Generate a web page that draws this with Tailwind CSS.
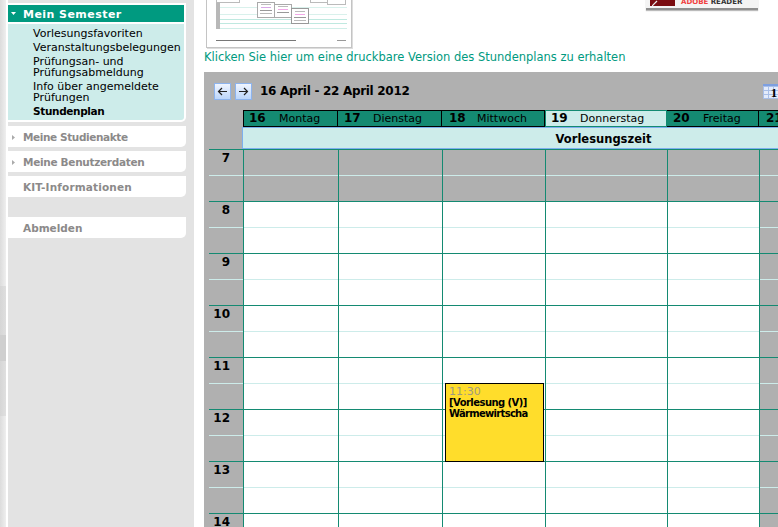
<!DOCTYPE html>
<html lang="de">
<head>
    <meta charset="UTF-8">
    <title>Stundenplan</title>
    <script src="https://cdn.jsdelivr.net/npm/@tailwindcss/browser@4"></script>
</head>
<body class="bg-white h-[527px] overflow-hidden font-['DejaVu_Sans',sans-serif] text-[11px] text-black">
<div class="flex h-[527px] overflow-hidden">
    <!-- linker Rand -->
    <div class="w-[6px] shrink-0 flex flex-col">
        <div class="h-[286px] bg-gradient-to-r from-[#dcdcdc] to-[#efefef]"></div>
        <div class="h-[49px] bg-gradient-to-r from-[#d6d6d6] to-[#dfdfdf]"></div>
        <div class="h-[26px] bg-[#cfcfcf]"></div>
        <div class="h-[55px] bg-gradient-to-r from-[#d6d6d6] to-[#e0e0e0]"></div>
        <div class="flex-1 bg-gradient-to-r from-[#dcdcdc] to-[#efefef]"></div>
    </div>

    <!-- Navigation -->
    <div class="ml-[2px] w-[186px] shrink-0 bg-[#e3e3e3] pr-[8px] pt-[3px]">
        <div class="bg-white pt-[2px] rounded-br-[5px] pr-[2px] pb-[2px]">
            <div class="h-[17px] bg-[#009a80] flex items-center text-white font-bold pl-[3px] pt-[4px] tracking-[0.45px]">
                <svg width="5" height="3" viewBox="0 0 5 3" class="mr-[7px] mb-[4px]"><path d="M0 0h5L2.500 3z" fill="#fff"/></svg>
                <span>Mein Semester</span>
            </div>
            <div class="mt-[2px] bg-[#cdecea] pl-[25px] pt-[4px] pb-[3px] leading-[11px] rounded-br-[3px]">
                <div class="mb-[3px]">Vorlesungsfavoriten</div>
                <div class="mb-[3px]">Veranstaltungsbelegungen</div>
                <div class="mb-[3px]">Prüfungsan- und<br>Prüfungsabmeldung</div>
                <div class="mb-[3px]">Info über angemeldete<br>Prüfungen</div>
                <div class="font-bold text-[10.500px] tracking-[-0.350px]">Stundenplan</div>
            </div>
        </div>
        <div class="mt-[4px] h-[21px] bg-white rounded-br-[5px] flex items-center pl-[4px] pt-[2px] font-bold text-[#8c8a8a] text-[10.500px] tracking-[-0.400px]">
            <svg width="3" height="5" viewBox="0 0 3 5" class="mr-[8px]"><path d="M0 0l3 2.500L0 5z" fill="#aaa"/></svg>Meine Studienakte
        </div>
        <div class="mt-[4px] h-[21px] bg-white rounded-br-[5px] flex items-center pl-[4px] pt-[2px] font-bold text-[#8c8a8a] text-[10.500px] tracking-[-0.300px]">
            <svg width="3" height="5" viewBox="0 0 3 5" class="mr-[8px]"><path d="M0 0l3 2.500L0 5z" fill="#aaa"/></svg>Meine Benutzerdaten
        </div>
        <div class="mt-[4px] h-[21px] bg-white rounded-br-[5px] flex items-center pl-[15px] pt-[2px] font-bold text-[#8c8a8a] text-[10.500px] tracking-[0.150px]">KIT-Informationen</div>
        <div class="mt-[20px] h-[21px] bg-white rounded-br-[5px] flex items-center pl-[15px] pt-[2px] font-bold text-[#8c8a8a] text-[10.500px]">Abmelden</div>
    </div>

    <!-- Inhalt -->
    <div class="ml-[10px] flex-1 min-w-0">
        <div class="h-[48px] relative">
            <!-- Vorschau druckbarer Stundenplan -->
            <div class="absolute left-[2px] top-[-10px] w-[146px] h-[58px] bg-white border border-[#c4c4c4] shadow-[1px_1px_0_#ddd]">
                <div class="absolute left-[10px] top-[16px] w-[130px] h-[8px] border-y border-[#d9f1ec]"></div>
                <div class="absolute left-[10px] top-[28px] w-[130px] h-[5px] border-y border-[#bfe9e0]"></div>
                <div class="absolute left-[10px] top-[35px] w-[130px] h-[3px] border-b border-[#cfeee8]"></div>
                <div class="absolute left-[9px] top-[0px] w-[4px] h-[38px] bg-[#b8b8b8]"></div>
                <div class="absolute left-[9px] top-[0px] w-[24px] h-[12px] border border-[#bbb] bg-white"></div>
                <div class="absolute left-[103px] top-[0px] w-[36px] h-[12px] border border-[#bbb] bg-white"></div>
                <div class="absolute left-[120px] top-[0px] w-[19px] h-[14px] border border-[#bbb] bg-white"></div>
                <div class="absolute left-[50px] top-[11px] w-[18px] h-[16px] border border-[#aaa] bg-white"></div>
                <div class="absolute left-[67px] top-[13px] w-[18px] h-[14px] border border-[#aaa] bg-white"></div>
                <div class="absolute left-[84px] top-[17px] w-[18px] h-[16px] border border-[#999] bg-white"></div>
                <div class="absolute left-[54px] top-[13px] w-[10px] h-[1px] bg-[#bbb]"></div>
                <div class="absolute left-[54px] top-[16px] w-[10px] h-[1px] bg-[#d9a8e8]"></div>
                <div class="absolute left-[53px] top-[19px] w-[12px] h-[1px] bg-[#999]"></div>
                <div class="absolute left-[53px] top-[22px] w-[12px] h-[1px] bg-[#bbb]"></div>
                <div class="absolute left-[71px] top-[15px] w-[10px] h-[1px] bg-[#bbb]"></div>
                <div class="absolute left-[71px] top-[18px] w-[10px] h-[1px] bg-[#f2a8e8]"></div>
                <div class="absolute left-[70px] top-[21px] w-[12px] h-[1px] bg-[#999]"></div>
                <div class="absolute left-[88px] top-[20px] w-[10px] h-[1px] bg-[#bbb]"></div>
                <div class="absolute left-[88px] top-[23px] w-[10px] h-[1px] bg-[#f2a8e8]"></div>
                <div class="absolute left-[87px] top-[26px] w-[12px] h-[1px] bg-[#999]"></div>
                <div class="absolute left-[87px] top-[29px] w-[12px] h-[1px] bg-[#bbb]"></div>
                <div class="absolute left-[9px] top-[49px] w-[80px] h-[1px] bg-[#777]"></div>
                <div class="absolute left-[130px] top-[49px] w-[9px] h-[1px] bg-[#999]"></div>
            </div>
            <!-- Adobe Reader -->
            <div class="absolute left-[442px] top-[-12px] w-[112px] h-[22px] bg-[#f4f4f4] border-b-2 border-[#8f8f8f] shadow-[0_1px_1px_#bbb] overflow-hidden">
                <div class="absolute left-[4px] top-0 w-[25px] h-[18px] bg-[#7a0c10]">
                    <svg width="6" height="6" viewBox="0 0 6 6" class="absolute left-[2px] top-[12px]"><path d="M0 6l5-5" stroke="#eee" stroke-width="1.200"/></svg>
                </div>
                <div class="absolute left-[35px] top-[9px] text-[7px] font-bold whitespace-nowrap"><span class="text-[#f04040]">ADOBE</span> <span class="text-[#333]">READER</span></div>
            </div>
        </div>
        <a class="block h-[24px] text-[11.500px] leading-[18px] text-[#009a80]">Klicken Sie hier um eine druckbare Version des Stundenplans zu erhalten</a>

        <!-- Kalender -->
        <div class="bg-[#b0b0b0] h-[455px] overflow-hidden">
            <div class="h-[38px] flex items-center pl-[10px] relative">
                <button class="w-[17px] h-[17px] border border-[#8db4ee] bg-gradient-to-b from-[#f0f5fe] to-[#bcd6fb] flex items-center justify-center">
                    <svg width="11" height="9" viewBox="0 0 11 9"><path d="M10 4.500H1.500M5 1L1.500 4.500 5 8" fill="none" stroke="#222" stroke-width="1.200"/></svg>
                </button>
                <button class="ml-[4px] w-[17px] h-[17px] border border-[#8db4ee] bg-gradient-to-b from-[#f0f5fe] to-[#bcd6fb] flex items-center justify-center">
                    <svg width="11" height="9" viewBox="0 0 11 9"><path d="M1 4.500h8.500M6 1l3.500 3.500L6 8" fill="none" stroke="#222" stroke-width="1.200"/></svg>
                </button>
                <span class="ml-[8px] text-[12px] font-bold tracking-[-0.300px]">16 April - 22 April 2012</span>
                <!-- Kalender-Symbol -->
                <div class="absolute left-[559px] top-[12px] w-[22px] h-[15px] border-t-2 border-[#7d9fe0] bg-[#e4ecfb] flex items-center justify-center font-['Liberation_Serif',serif] font-bold text-[13px] leading-none bg-[repeating-linear-gradient(90deg,#a9bfe8_0,#a9bfe8_1px,transparent_1px,transparent_5px),repeating-linear-gradient(#a9bfe8_0,#a9bfe8_1px,transparent_1px,transparent_4px)]">1</div>
            </div>

            <!-- Tage -->
            <div class="pl-[39px] flex h-[17px] w-[600px] text-[11px] leading-[15px]">
                <div class="w-[95px] shrink-0 bg-[#148a72] border border-black flex items-baseline pl-[5px]"><b class="text-[12px] w-[30px]">16</b>Montag</div>
                <div class="w-[104px] shrink-0 bg-[#148a72] border-y border-r border-black flex items-baseline pl-[6px]"><b class="text-[12px] w-[29px]">17</b>Dienstag</div>
                <div class="w-[103px] shrink-0 bg-[#148a72] border-y border-r border-black flex items-baseline pl-[7px]"><b class="text-[12px] w-[28px]">18</b>Mittwoch</div>
                <div class="w-[122px] shrink-0 bg-[#cdecea] border border-[#148a72] flex items-baseline pl-[5px]"><b class="text-[12px] w-[29px]">19</b>Donnerstag</div>
                <div class="w-[92px] shrink-0 bg-[#148a72] border-y border-r border-black flex items-baseline pl-[6px]"><b class="text-[12px] w-[30px]">20</b>Freitag</div>
                <div class="w-[40px] shrink-0 bg-[#148a72] border-y border-black flex items-baseline pl-[7px]"><b class="text-[12px]">21</b></div>
            </div>

            <!-- Vorlesungszeit -->
            <div class="ml-[38px] w-[722px] h-[22px] bg-[#cdecea] border-y border-l border-[#7db0ee] flex items-center justify-center pt-[3px] font-bold text-[11.500px]">Vorlesungszeit</div>

            <!-- Stundenraster -->
            <div class="ml-[5px] grid grid-cols-[34px_95px_104px_103px_122px_92px_40px] relative w-[590px]">
                <!-- Zeiten -->
                <div class="flex flex-col">
                    <div class="h-[52px] border-t border-[#148a72]"><div class="h-[26px] border-b border-[#cdecea] text-right pr-[13px] font-bold text-[12px] leading-[17px]">7</div></div>
                    <div class="h-[52px] border-t border-[#148a72]"><div class="h-[26px] border-b border-[#cdecea] text-right pr-[13px] font-bold text-[12px] leading-[17px]">8</div></div>
                    <div class="h-[52px] border-t border-[#148a72]"><div class="h-[26px] border-b border-[#cdecea] text-right pr-[13px] font-bold text-[12px] leading-[17px]">9</div></div>
                    <div class="h-[52px] border-t border-[#148a72]"><div class="h-[26px] border-b border-[#cdecea] text-right pr-[13px] font-bold text-[12px] leading-[17px]">10</div></div>
                    <div class="h-[52px] border-t border-[#148a72]"><div class="h-[26px] border-b border-[#cdecea] text-right pr-[13px] font-bold text-[12px] leading-[17px]">11</div></div>
                    <div class="h-[52px] border-t border-[#148a72]"><div class="h-[26px] border-b border-[#cdecea] text-right pr-[13px] font-bold text-[12px] leading-[17px]">12</div></div>
                    <div class="h-[52px] border-t border-[#148a72]"><div class="h-[26px] border-b border-[#cdecea] text-right pr-[13px] font-bold text-[12px] leading-[17px]">13</div></div>
                    <div class="h-[52px] border-t border-[#148a72]"><div class="h-[26px] border-b border-[#cdecea] text-right pr-[13px] font-bold text-[12px] leading-[17px]">14</div></div>
                </div>
                <!-- Montag -->
                <div class="border-l border-[#148a72] bg-[linear-gradient(#b0b0b0_52px,#fff_52px)] h-[416px]">
                    <div class="h-full bg-[repeating-linear-gradient(#148a72_0,#148a72_1px,transparent_1px,transparent_26px,#cdecea_26px,#cdecea_27px,transparent_27px,transparent_52px)]"></div>
                </div>
                <!-- Dienstag -->
                <div class="border-l border-[#148a72] bg-[linear-gradient(#b0b0b0_52px,#fff_52px)] h-[416px]">
                    <div class="h-full bg-[repeating-linear-gradient(#148a72_0,#148a72_1px,transparent_1px,transparent_26px,#cdecea_26px,#cdecea_27px,transparent_27px,transparent_52px)]"></div>
                </div>
                <!-- Mittwoch -->
                <div class="border-l border-[#148a72] bg-[linear-gradient(#b0b0b0_52px,#fff_52px)] h-[416px] relative">
                    <div class="h-full bg-[repeating-linear-gradient(#148a72_0,#148a72_1px,transparent_1px,transparent_26px,#cdecea_26px,#cdecea_27px,transparent_27px,transparent_52px)]"></div>
                    <div class="absolute left-[2px] top-[234px] w-[99px] h-[79px] bg-[#ffdd2b] border border-black pl-[3px] pt-[2px] leading-[11px] overflow-hidden">
                        <div class="text-[#a09a80]">11:30</div>
                        <div class="font-bold text-[10px] tracking-[-0.550px] whitespace-nowrap">[Vorlesung (V)]</div>
                        <div class="font-bold text-[10px] tracking-[-0.700px] whitespace-nowrap">Wärmewirtscha</div>
                    </div>
                </div>
                <!-- Donnerstag -->
                <div class="border-l border-[#148a72] bg-[linear-gradient(#b0b0b0_52px,#fff_52px)] h-[416px]">
                    <div class="h-full bg-[repeating-linear-gradient(#148a72_0,#148a72_1px,transparent_1px,transparent_26px,#cdecea_26px,#cdecea_27px,transparent_27px,transparent_52px)]"></div>
                </div>
                <!-- Freitag -->
                <div class="border-l border-[#148a72] bg-[linear-gradient(#b0b0b0_52px,#fff_52px)] h-[416px]">
                    <div class="h-full bg-[repeating-linear-gradient(#148a72_0,#148a72_1px,transparent_1px,transparent_26px,#cdecea_26px,#cdecea_27px,transparent_27px,transparent_52px)]"></div>
                </div>
                <!-- Samstag -->
                <div class="border-l border-[#148a72] h-[416px]">
                    <div class="h-full bg-[repeating-linear-gradient(#148a72_0,#148a72_1px,transparent_1px,transparent_26px,#cdecea_26px,#cdecea_27px,transparent_27px,transparent_52px)]"></div>
                </div>
            </div>
        </div>
    </div>
</div>
</body>
</html>
